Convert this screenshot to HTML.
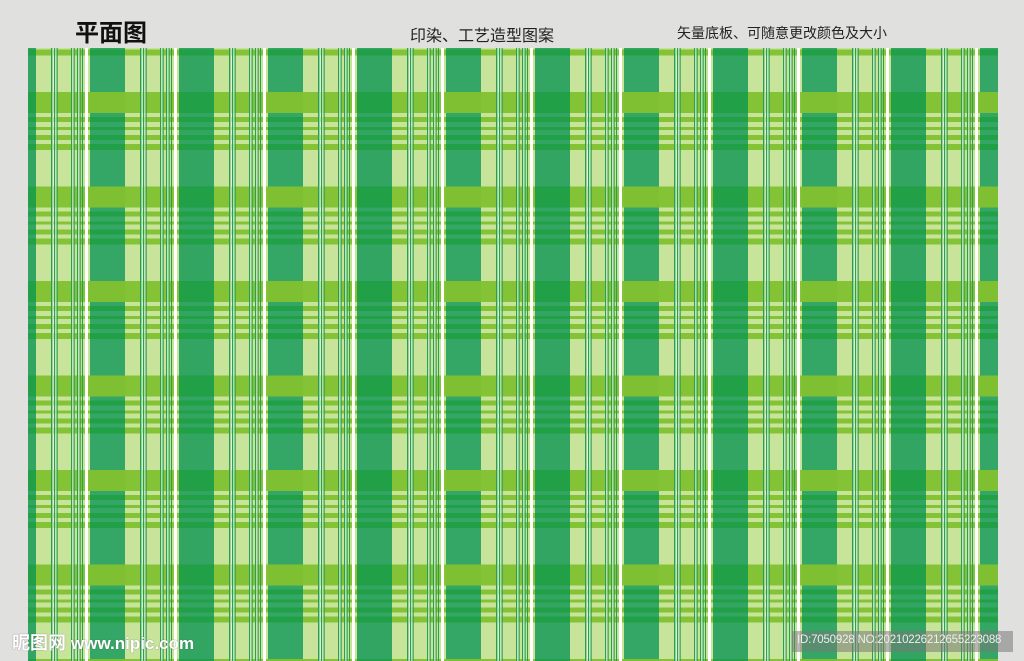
<!DOCTYPE html>
<html><head><meta charset="utf-8"><style>
html,body{margin:0;padding:0;width:1024px;height:661px;overflow:hidden;background:#e0e0df;position:relative;font-family:"Liberation Sans","Noto Sans CJK SC",sans-serif}
.t{position:absolute;white-space:nowrap;color:#222}
</style></head><body>
<div class="t" style="left:75px;top:13px;font-size:24px;font-weight:bold;color:#111">平面图</div>
<div class="t" style="left:410px;top:22px;font-size:16px">印染、工艺造型图案</div>
<div class="t" style="left:677px;top:23px;font-size:14px">矢量底板、可随意更改颜色及大小</div>
<svg style="position:absolute;left:0;top:0" width="1024" height="661">
<defs>
<pattern id="p" patternUnits="userSpaceOnUse" width="178" height="94.5" patternTransform="translate(90,92)">
<rect width="178" height="94.5" fill="#c8e49a"/>
<g fill="#84c335">
<rect y="0" width="178" height="21"/><rect y="25" width="178" height="5"/><rect y="35" width="178" height="3"/><rect y="43" width="178" height="5"/><rect y="52" width="178" height="6"/>
</g>
<rect x="0" width="35" height="94.5" fill="#34a766"/>
<rect x="89" width="35" height="94.5" fill="#32a563"/>
<g fill="#7fc032">
<rect x="0" y="0" width="35" height="21"/>
</g>
<g fill="#22a047">
<rect x="0" y="25" width="35" height="5"/><rect x="0" y="35" width="35" height="3"/><rect x="0" y="43" width="35" height="5"/><rect x="0" y="52" width="35" height="6"/>
<rect x="89" y="0" width="35" height="21"/><rect x="89" y="25" width="35" height="5"/><rect x="89" y="35" width="35" height="3"/><rect x="89" y="43" width="35" height="5"/><rect x="89" y="52" width="35" height="6"/>
</g>
<g id="c">
<rect x="50" width="1.5" height="94.5" fill="#2a9f4c"/><rect x="51.5" width="1" height="94.5" fill="#fff"/><rect x="53" width="1.2" height="94.5" fill="#2a9f4c"/><rect x="54.5" width="0.8" height="94.5" fill="#fff"/><rect x="55.5" width="1.2" height="94.5" fill="#2a9f4c"/>
<rect x="70" width="1.2" height="94.5" fill="#2a9f4c"/><rect x="71.5" width="0.8" height="94.5" fill="#fff"/><rect x="72.5" width="1.2" height="94.5" fill="#2a9f4c"/><rect x="76" width="1.2" height="94.5" fill="#2a9f4c"/><rect x="77.5" width="0.8" height="94.5" fill="#fff"/><rect x="78.5" width="1.2" height="94.5" fill="#2a9f4c"/><rect x="81" width="1" height="94.5" fill="#2a9f4c"/>
<rect x="84" width="3" height="94.5" fill="#fff"/>
</g>
<use href="#c" x="89"/>
</pattern>
</defs>
<rect x="28" y="48" width="970" height="613" fill="url(#p)"/>
</svg>
<div class="t" style="left:12px;top:629px;font-size:18px;font-weight:bold;color:#fff;text-shadow:0 0 1px #555">昵图网 <span style="font-size:17px">www.nipic.com</span></div>
<div style="position:absolute;left:792px;top:631px;width:221px;height:21px;background:rgba(120,120,120,0.55)"></div>
<div class="t" style="left:797px;top:634px;font-size:11.5px;letter-spacing:-0.2px;color:#eee">ID:7050928 NO:20210226212655223088</div>
</body></html>
